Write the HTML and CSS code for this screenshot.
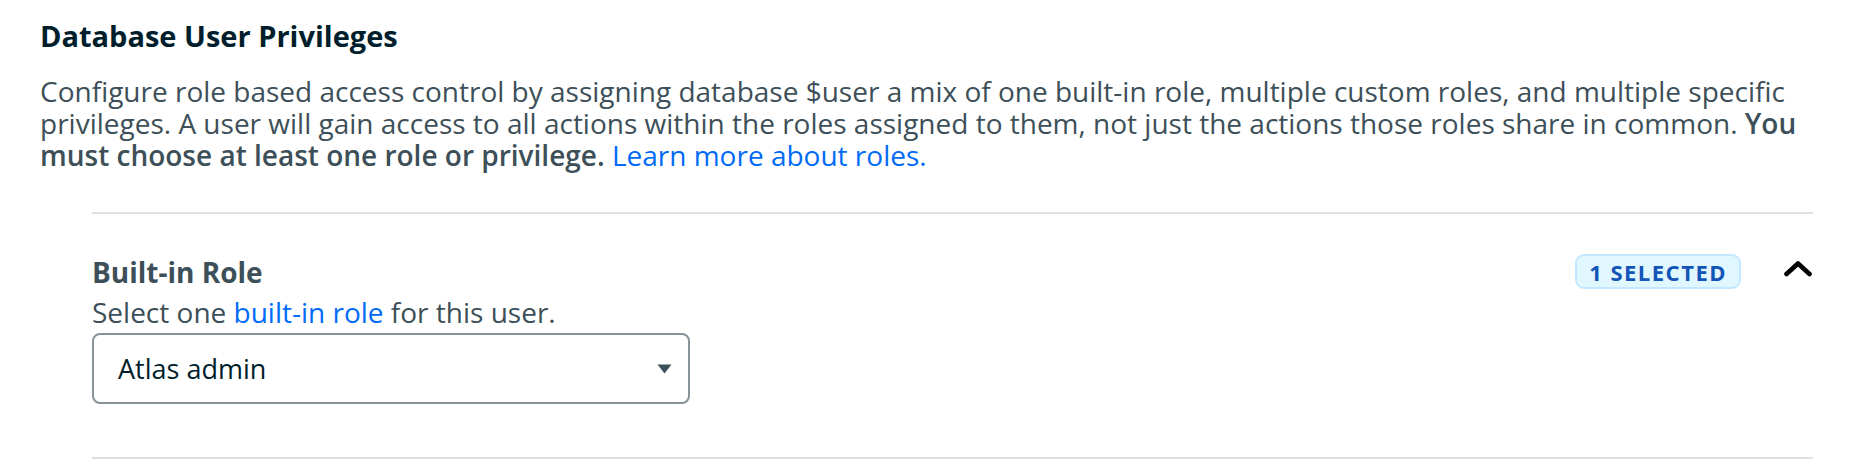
FILE: index.html
```html
<!DOCTYPE html>
<html lang="en">
<head>
<meta charset="utf-8">
<title>Database User Privileges</title>
<link rel="stylesheet" href="styles.css">
</head>
<body>
<div class="page">
  <h2 class="title">Database User Privileges</h2>
  <p class="desc">Configure role based access control by assigning database $user a mix of one built-in role, multiple custom roles, and multiple specific privileges. A user will gain access to all actions within the roles assigned to them, not just the actions those roles share in common. <strong>You must choose at least one role or privilege.</strong> <a href="#" class="link">Learn more about roles.</a></p>
  <section class="section">
    <div class="role">
      <div class="role-header">
        <h3 class="role-title">Built-in Role</h3>
        <div class="role-meta">
          <span class="badge">1 Selected</span>
          <button class="chevron" type="button" aria-label="Collapse">
            <svg width="28" height="17" viewBox="0 0 28 17"><polyline points="2.5,14 14,3.5 25.5,14" fill="none" stroke="#000" stroke-width="4.6" stroke-linejoin="round" stroke-linecap="round"/></svg>
          </button>
        </div>
      </div>
      <p class="hint">Select one <a href="#" class="link">built-in role</a> for this user.</p>
      <div class="select">
        <span class="select-value">Atlas admin</span>
        <svg class="caret" width="15" height="10" viewBox="0 0 15 10"><polygon points="0.5,0.5 14.5,0.5 7.5,9.5" fill="#3d4f58"/></svg>
      </div>
    </div>
  </section>
</div>
</body>
</html>
```
FILE: styles.css
```css
* { box-sizing: border-box; }
html, body { margin: 0; padding: 0; background: #ffffff; }
body {
  font-family: "Open Sans", "Liberation Sans", sans-serif;
  color: #3d4f58;
}
.page {
  padding: 20px 0 0 40px;
  width: 1868px;
}
.title {
  margin: 0;
  font-size: 29px;
  line-height: 32px;
  font-weight: 700;
  color: #001e2b;
}
.desc {
  margin: 23px 0 0 0;
  max-width: 1800px;
  font-size: 28px;
  line-height: 32px;
  color: #3d4f58;
}
.desc strong { font-weight: 600; }
.link { color: #016bf8; text-decoration: none; }
.section {
  margin: 41px 0 0 52px;
  width: 1721px;
  border-top: 2px solid #dde1e1;
  border-bottom: 2px solid #dde1e1;
}
.role {
  padding: 40px 0 53px 0;
}
.role-header {
  display: flex;
  align-items: center;
  justify-content: space-between;
  height: 35px;
}
.role-title {
  margin: 0;
  font-size: 28px;
  line-height: 32px;
  font-weight: 700;
  color: #3d4f58;
}
.role-meta {
  display: flex;
  align-items: center;
  gap: 43px;
}
.badge {
  display: inline-flex;
  align-items: center;
  height: 35px;
  padding: 0 12px;
  border: 2px solid #c3e7fe;
  border-radius: 9px;
  background: #e1f7ff;
  color: #1254b7;
  font-size: 22px;
  font-weight: 700;
  letter-spacing: 1.5px;
  text-transform: uppercase;
}
.chevron {
  display: flex;
  padding: 0;
  margin: 0 1px 0 0;
  border: 0;
  background: none;
  position: relative;
  top: -3px;
}
.hint {
  margin: 7px 0 0 0;
  font-size: 28px;
  line-height: 32px;
  color: #3d4f58;
}
.select {
  margin-top: 5px;
  width: 598px;
  height: 71px;
  border: 2px solid #889397;
  border-radius: 8px;
  display: flex;
  align-items: center;
  justify-content: space-between;
  padding: 0 16px 0 24px;
}
.select-value {
  font-size: 27px;
  color: #001e2b;
}
.caret { display: block; }
```
